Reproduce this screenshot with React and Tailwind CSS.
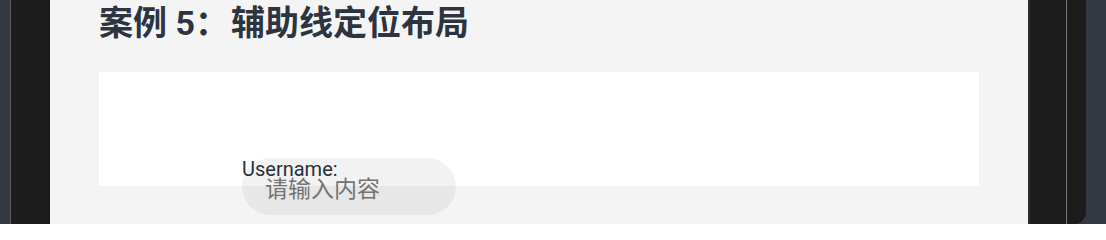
export default function App() {
  return (
    <div className="flex h-[224px] w-[1106px] overflow-hidden bg-[#343843]">
      {/* previewer frame, left */}
      <div className="w-[10px] shrink-0 bg-[#343843]" />
      <div className="w-px shrink-0 bg-[#5c5f66]" />
      <div className="w-[38px] shrink-0 bg-[#1c1c1c]" />
      <div className="w-px shrink-0 bg-[#141414]" />

      <main className="w-[978px] shrink-0 bg-[#f4f4f4] px-[49px]">
        <h1
          className="h-[72px] text-[34px] font-bold leading-[46px] text-[#2d3440]"
          style={{ fontFamily: 'Roboto, "Noto Sans CJK SC", sans-serif' }}
        >
          案例 5：<span className="ml-[2px]">辅助线定位布局</span>
        </h1>

        <div className="relative h-[114px] bg-white">
          <input
            type="text"
            placeholder="请输入内容"
            className="absolute left-[143px] top-[86px] h-[57px] w-[214px] rounded-full bg-black/5 pl-[23px] text-[23px] text-[#333] outline-none placeholder:text-[#737373]"
            style={{ fontFamily: '"Noto Sans CJK SC", sans-serif' }}
          />
          <span
            className="absolute left-[143px] top-[87px] text-[20px] leading-[20px] text-[#2a2f38]"
            style={{ fontFamily: 'Roboto, "Noto Sans CJK SC", sans-serif' }}
          >
            Username:
          </span>
        </div>
      </main>

      {/* previewer frame, right */}
      <div className="w-[2px] shrink-0 bg-[#2b2b2b]" />
      <div className="w-[36px] shrink-0 bg-[#1c1c1c]" />
      <div className="w-px shrink-0 bg-[#7a7a7a]" />
      <div className="w-[19px] shrink-0 rounded-br-[12px] bg-[#1c1c1c]" />
      <div className="flex-1 bg-[#343843]" />
    </div>
  );
}
